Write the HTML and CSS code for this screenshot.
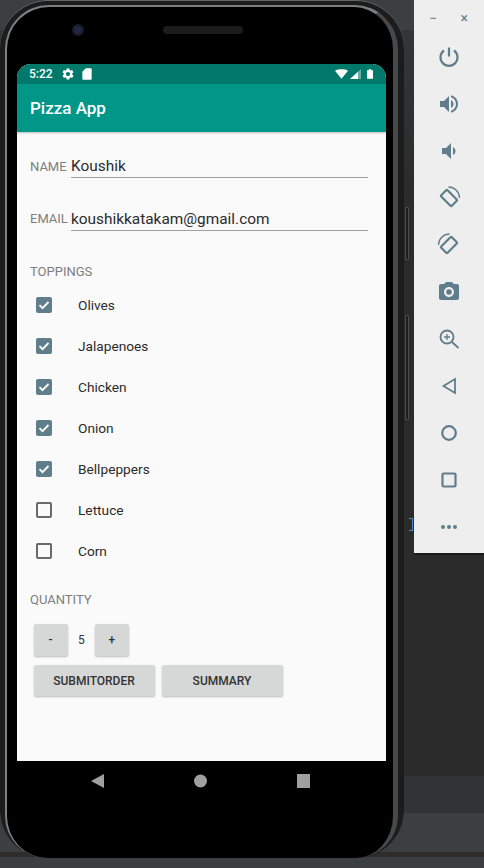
FILE: index.html
```html
<!DOCTYPE html>
<html lang="en">
  <head>
    <meta charset="UTF-8" />
    <title>Pizza App</title>
    <link rel="stylesheet" href="styles.css">
  </head>
  <body>
    <div class="phone">
      <div class="face">
        <div class="bezel-top">
          <div class="camera"></div>
          <div class="speaker"></div>
        </div>
        <div class="screen">
          <div class="status-bar">
            <span class="clock">5:22</span>
            <svg class="status-icon gear" viewBox="0 0 24 24"><path d="M19.14 12.94c.04-.3.06-.61.06-.94 0-.32-.02-.64-.07-.94l2.03-1.58c.18-.14.23-.41.12-.61l-1.92-3.32c-.12-.22-.37-.29-.59-.22l-2.39.96c-.5-.38-1.03-.7-1.62-.94l-.36-2.54c-.04-.24-.24-.41-.48-.41h-3.84c-.24 0-.43.17-.47.41l-.36 2.54c-.59.24-1.13.57-1.62.94l-2.39-.96c-.22-.08-.47 0-.59.22L2.74 8.87c-.12.21-.08.47.12.61l2.03 1.58c-.05.3-.09.63-.09.94s.02.64.07.94l-2.03 1.58c-.18.14-.23.41-.12.61l1.92 3.32c.12.22.37.29.59.22l2.39-.96c.5.38 1.03.7 1.62.94l.36 2.54c.05.24.24.41.48.41h3.84c.24 0 .44-.17.47-.41l.36-2.54c.59-.24 1.13-.56 1.62-.94l2.39.96c.22.08.47 0 .59-.22l1.92-3.32c.12-.22.07-.47-.12-.61l-2.01-1.58zM12 15.6c-1.98 0-3.6-1.62-3.6-3.6s1.62-3.6 3.6-3.6 3.6 1.62 3.6 3.6-1.62 3.6-3.6 3.6z"/></svg>
            <svg class="status-icon sd" viewBox="0 0 24 24"><path d="M18 2h-8L4 8v12c0 1.1.9 2 2 2h12c1.1 0 2-.9 2-2V4c0-1.1-.9-2-2-2z"/></svg>
            <span class="status-right">
              <svg class="wifi" viewBox="0 0 14 10"><path d="M0 1.5C2 .5 4.5 0 7 0s5 .5 7 1.500L7 10z"/></svg>
              <svg class="signal" viewBox="0 0 11 10"><path d="M11 0v10H0z" opacity="0.4"/><path d="M8 2.700V10H0z"/></svg>
              <svg class="battery" viewBox="0 0 7 11"><path d="M2 0h3v1h2v10H0V1h2z"/></svg>
            </span>
          </div>
          <div class="toolbar">Pizza App</div>
          <div class="form">
            <div class="field">
              <span class="label field-label">NAME</span>
              <div class="input">Koushik</div>
            </div>
            <div class="field field-email">
              <span class="label field-label">EMAIL</span>
              <div class="input">koushikkatakam@gmail.com</div>
            </div>

            <div class="label section-label">TOPPINGS</div>
            <div class="toppings">
              <div class="topping">
                <svg class="check" viewBox="0 0 16 16"><rect width="16" height="16" rx="2"/><path class="tick" d="M3.5 8.2l3 3 6-6.200"/></svg>
                <span>Olives</span>
              </div>
              <div class="topping">
                <svg class="check" viewBox="0 0 16 16"><rect width="16" height="16" rx="2"/><path class="tick" d="M3.5 8.2l3 3 6-6.200"/></svg>
                <span>Jalapenoes</span>
              </div>
              <div class="topping">
                <svg class="check" viewBox="0 0 16 16"><rect width="16" height="16" rx="2"/><path class="tick" d="M3.5 8.2l3 3 6-6.200"/></svg>
                <span>Chicken</span>
              </div>
              <div class="topping">
                <svg class="check" viewBox="0 0 16 16"><rect width="16" height="16" rx="2"/><path class="tick" d="M3.5 8.2l3 3 6-6.200"/></svg>
                <span>Onion</span>
              </div>
              <div class="topping">
                <svg class="check" viewBox="0 0 16 16"><rect width="16" height="16" rx="2"/><path class="tick" d="M3.5 8.2l3 3 6-6.200"/></svg>
                <span>Bellpeppers</span>
              </div>
              <div class="topping">
                <div class="check-empty"></div>
                <span>Lettuce</span>
              </div>
              <div class="topping">
                <div class="check-empty"></div>
                <span>Corn</span>
              </div>
            </div>

            <div class="label quantity-label">QUANTITY</div>
            <div class="stepper">
              <button class="btn btn-small">-</button>
              <span class="count">5</span>
              <button class="btn btn-small">+</button>
            </div>
            <div class="actions">
              <button class="btn btn-wide">SUBMITORDER</button>
              <button class="btn btn-wide">SUMMARY</button>
            </div>
          </div>
        </div>
        <div class="nav-bar">
          <svg class="nav-icon" viewBox="0 0 13 14"><path d="M13 0v14L0 7z"/></svg>
          <svg class="nav-icon" viewBox="0 0 13 14"><circle cx="6.5" cy="7" r="6.500"/></svg>
          <svg class="nav-icon" viewBox="0 0 13 14"><rect width="13" height="14"/></svg>
        </div>
      </div>
      <div class="side-key side-key-top"></div>
      <div class="side-key side-key-bottom"></div>
    </div>

    <div class="tools">
      <div class="tools-title">
        <span class="win-btn">&minus;</span>
        <span class="win-btn">&times;</span>
      </div>
      <div class="tool">
        <svg viewBox="0 0 24 24" class="line"><path d="M12 2.5v9"/><path d="M7 5.5a8.500 8.500 0 1 0 10 0"/></svg>
      </div>
      <div class="tool">
        <svg viewBox="0 0 24 24"><path d="M3 9v6h4l5 5V4L7 9H3zm13.5 3c0-1.770-1.020-3.290-2.500-4.030v8.050c1.480-.73 2.500-2.250 2.500-4.020z"/><path d="M14 3.23v2.060c2.890.86 5 3.540 5 6.710s-2.110 5.850-5 6.710v2.060c4.010-.91 7-4.490 7-8.770s-2.990-7.860-7-8.770z"/></svg>
      </div>
      <div class="tool">
        <svg viewBox="0 0 24 24"><path d="M18.5 12c0-1.770-1.020-3.290-2.500-4.030v8.050c1.480-.73 2.500-2.250 2.500-4.020zM5 9v6h4l5 5V4L9 9H5z"/></svg>
      </div>
      <div class="tool">
        <svg viewBox="0 0 24 24" class="line"><rect x="7.5" y="4.500" width="9" height="15" rx="1" transform="rotate(-45 12 12)"/><path class="thin" d="M11.5 1a11 11 0 0 1 11 11"/></svg>
      </div>
      <div class="tool">
        <svg viewBox="0 0 24 24" class="line"><rect x="7.5" y="4.500" width="9" height="15" rx="1" transform="rotate(45 12 12)"/><path class="thin" d="M12.5 1a11 11 0 0 0-11 11"/></svg>
      </div>
      <div class="tool">
        <svg viewBox="0 0 24 24"><path d="M9 2L7.170 4H4c-1.100 0-2 .9-2 2v12c0 1.100.9 2 2 2h16c1.100 0 2-.9 2-2V6c0-1.100-.9-2-2-2h-3.170L15 2H9zm3 15c-2.760 0-5-2.240-5-5s2.240-5 5-5 5 2.240 5 5-2.240 5-5 5zm0-2.200a2.800 2.800 0 1 0 0-5.600 2.800 2.800 0 0 0 0 5.600z" fill-rule="evenodd"/></svg>
      </div>
      <div class="tool">
        <svg viewBox="0 0 24 24" class="line line-fine"><circle cx="10" cy="10" r="6.500"/><path d="M15 15l6.500 6"/><path d="M10 7v6M7 10h6" class="thin"/></svg>
      </div>
      <div class="tool">
        <svg viewBox="0 0 24 24" class="line line-fine"><path d="M18 5v14L6.500 12z"/></svg>
      </div>
      <div class="tool">
        <svg viewBox="0 0 24 24" class="line"><circle cx="12" cy="12" r="6.800"/></svg>
      </div>
      <div class="tool">
        <svg viewBox="0 0 24 24" class="line"><rect x="5.500" y="5.500" width="13" height="13" rx="1"/></svg>
      </div>
      <div class="tool">
        <svg viewBox="0 0 24 24"><circle cx="6" cy="12" r="2"/><circle cx="12" cy="12" r="2"/><circle cx="18" cy="12" r="2"/></svg>
      </div>
    </div>
    <div class="code-mark"></div>
  </body>
</html>
```

FILE: styles.css
```css
body {
  margin: 0;
  height: 868px;
  overflow: hidden;
  display: flex;
  align-items: flex-start;
  font-family: Roboto, "Liberation Sans", sans-serif;
  background: linear-gradient(
    #3c3f41 0,
    #3c3f41 30px,
    #333537 30px,
    #2b2b2b 200px,
    #2b2b2b 776px,
    #313335 776px,
    #313335 813px,
    #3c3f41 813px,
    #3c3f41 852px,
    #2f2d2b 852px,
    #2f2d2b 857px,
    #3c3f41 857px
  );
}
.phone {
  position: relative;
  flex: none;
  box-sizing: border-box;
  width: 404px;
  height: 858px;
  padding: 5px 6px 0 5px;
  background: #1c1c1c;
  border-radius: 48px;
  box-shadow: inset 0 1px 0 #666;
}
.face {
  box-sizing: border-box;
  height: 853px;
  padding: 0 7px 0 10px;
  background: #000;
  border-style: solid;
  border-width: 2px 5px 0 2px;
  border-color: #7d7f80 #47484a #000 #7d7f80;
  border-radius: 44px 44px 42px 42px;
}
.bezel-top {
  height: 57px;
  box-sizing: border-box;
  padding: 17px 0 0 55px;
  display: flex;
  align-items: flex-start;
}
.camera {
  width: 12px;
  height: 12px;
  border-radius: 50%;
  background: radial-gradient(#1e2a4a 25%, #17181a 70%);
}
.speaker {
  width: 80px;
  height: 8px;
  margin: 2px 0 0 79px;
  border-radius: 4px;
  background: #1c1c1c;
}
.screen {
  height: 697px;
  background: #fafafa;
  border-radius: 14px 14px 0 0;
  overflow: hidden;
}
.status-bar {
  height: 20px;
  box-sizing: border-box;
  padding: 0 13px 0 12px;
  display: flex;
  align-items: center;
  background: #00796b;
  color: #fff;
}
.clock {
  font-size: 12px;
  font-weight: 500;
  width: 32px;
}
.status-icon {
  fill: #fff;
  width: 14px;
  height: 14px;
}
.sd {
  margin-left: 5px;
}
.status-right {
  margin-left: auto;
  display: flex;
  align-items: center;
  gap: 2px;
}
.status-right svg {
  fill: #fff;
  display: block;
}
.wifi {
  width: 13px;
  height: 10px;
}
.signal {
  width: 11px;
  height: 10px;
  margin-right: 4px;
}
.battery {
  width: 6px;
  height: 10px;
}
.toolbar {
  height: 48px;
  box-sizing: border-box;
  padding: 0 13px;
  display: flex;
  align-items: center;
  background: #009688;
  color: #fff;
  font-size: 17px;
  font-weight: 500;
  box-shadow: 0 1px 2px rgba(0, 0, 0, 0.25);
}
.form {
  padding: 22px 18px 0 13px;
}
.label {
  color: #7e7e7e;
  font-size: 13px;
  line-height: 16px;
}
.field {
  display: flex;
  align-items: center;
  height: 24px;
}
.field-email {
  margin-top: 28.500px;
}
.field-label {
  width: 41px;
  flex: none;
  padding-top: 1px;
}
.input {
  flex: 1;
  height: 24px;
  line-height: 24px;
  font-size: 15.400px;
  color: #2b2b2b;
  border-bottom: 1px solid #a0a0a0;
  box-sizing: border-box;
}
.section-label {
  margin-top: 33.500px;
}
.toppings {
  margin-top: 4px;
  margin-bottom: 21px;
}
.topping {
  height: 41px;
  padding-left: 6px;
  display: flex;
  align-items: center;
  gap: 26px;
  font-size: 13.700px;
  color: #2b2b2b;
}
.topping span {
  padding-top: 1px;
}
.check {
  width: 16px;
  height: 16px;
  flex: none;
  fill: #607d8b;
}
.tick {
  fill: none;
  stroke: #fff;
  stroke-width: 1.800;
}
.check-empty {
  width: 16px;
  height: 16px;
  flex: none;
  box-sizing: border-box;
  border: 2px solid #6a6a6a;
  border-radius: 2px;
}
.stepper {
  margin: 16px 0 0 3.500px;
  display: flex;
  align-items: center;
}
.actions {
  margin: 9px 0 0 3.500px;
  display: flex;
  gap: 7px;
}
.btn {
  padding: 0;
  border: none;
  border-radius: 2px;
  background: #d6d7d7;
  color: #333;
  font-family: inherit;
  font-size: 12px;
  font-weight: 500;
  box-shadow: 0 1px 2px rgba(0, 0, 0, 0.25);
}
.btn-small {
  width: 34.300px;
  height: 32px;
}
.btn-wide {
  width: 121px;
  height: 31px;
}
.count {
  width: 27px;
  text-align: center;
  font-size: 12px;
  color: #333;
}
.nav-bar {
  padding: 13px 76px 0 74px;
  display: flex;
  justify-content: space-between;
}
.nav-icon {
  width: 13px;
  height: 14px;
  fill: #a0a0a0;
}
.side-key {
  position: absolute;
  left: 405px;
  box-sizing: border-box;
  width: 4px;
  background: #1d1d1d;
  border: 1px solid #4c4c4c;
  border-radius: 1px;
}
.side-key-top {
  top: 207px;
  height: 53px;
}
.side-key-bottom {
  top: 315px;
  height: 105px;
}
.tools {
  flex: none;
  box-sizing: border-box;
  width: 70px;
  height: 555px;
  margin-left: 10px;
  background: #eeeeee;
  border-bottom: 2px solid #1c1c1c;
}
.tools-title {
  height: 33.500px;
  box-sizing: border-box;
  padding: 3px 16px 0 15px;
  display: flex;
  justify-content: space-between;
  align-items: center;
}
.win-btn {
  font-size: 14px;
  color: #607d8b;
}
.tool {
  height: 47px;
  display: flex;
  align-items: center;
  justify-content: center;
}
.tool svg {
  width: 24px;
  height: 24px;
  fill: #607d8b;
}
.tool .line {
  fill: none;
  stroke: #607d8b;
  stroke-width: 2.200;
}
.tool .line-fine {
  stroke-width: 1.800;
}
.tool .thin {
  stroke-width: 1.300;
}
.code-mark {
  position: absolute;
  left: 409px;
  top: 518px;
  width: 3px;
  height: 11px;
  border: 1px solid #4a88c7;
  border-left: none;
}
```
